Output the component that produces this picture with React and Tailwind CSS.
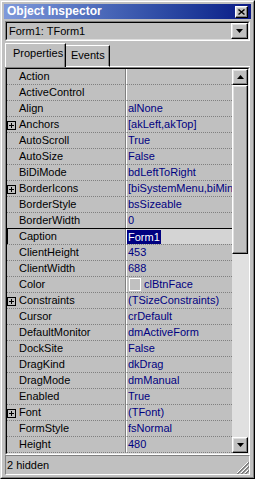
import React from 'react';

const props = [
  { name: 'Action', value: '' },
  { name: 'ActiveControl', value: '' },
  { name: 'Align', value: 'alNone' },
  { name: 'Anchors', value: '[akLeft,akTop]', plus: true },
  { name: 'AutoScroll', value: 'True' },
  { name: 'AutoSize', value: 'False' },
  { name: 'BiDiMode', value: 'bdLeftToRight' },
  { name: 'BorderIcons', value: '[biSystemMenu,biMinimize,biMaximize]', plus: true },
  { name: 'BorderStyle', value: 'bsSizeable' },
  { name: 'BorderWidth', value: '0' },
  { name: 'Caption', value: 'Form1', selected: true },
  { name: 'ClientHeight', value: '453' },
  { name: 'ClientWidth', value: '688' },
  { name: 'Color', value: 'clBtnFace', swatch: true },
  { name: 'Constraints', value: '(TSizeConstraints)', plus: true },
  { name: 'Cursor', value: 'crDefault' },
  { name: 'DefaultMonitor', value: 'dmActiveForm' },
  { name: 'DockSite', value: 'False' },
  { name: 'DragKind', value: 'dkDrag' },
  { name: 'DragMode', value: 'dmManual' },
  { name: 'Enabled', value: 'True' },
  { name: 'Font', value: '(TFont)', plus: true },
  { name: 'FormStyle', value: 'fsNormal' },
  { name: 'Height', value: '480' },
];

const raised =
  'border border-t-white border-l-white border-r-black border-b-black shadow-[inset_-1px_-1px_0_#808080,inset_1px_1px_0_#dfdfdf]';

function PlusBox() {
  return (
    <svg width="9" height="9" viewBox="0 0 9 9" className="shrink-0 mt-[4px]">
      <rect x="0.5" y="0.5" width="8" height="8" fill="none" stroke="#000" />
      <path d="M2 4.5h5M4.5 2v5" stroke="#000" />
    </svg>
  );
}

function Arrow({ down }) {
  return (
    <svg width="7" height="4" viewBox="0 0 7 4">
      {down ? <path d="M0 0h7L3.5 4z" fill="#000" /> : <path d="M0 4h7L3.5 0z" fill="#000" />}
    </svg>
  );
}

function PropRow({ p, beforeSelected }) {
  return (
    <div
      className={`flex h-[16px] border-b ${
        beforeSelected ? 'border-solid border-black' : 'border-dotted border-[#808080]'
      } ${p.selected ? 'shadow-[inset_1px_0_0_#000]' : ''}`}
    >
      <div className="w-[118px] flex items-start overflow-hidden whitespace-nowrap">
        <div className="w-[12px] shrink-0 flex">{p.plus && <PlusBox />}</div>
        <span className="leading-[15px] text-black">{p.name}</span>
      </div>
      <div className="w-[2px] h-[15px] border-l border-[#808080] bg-white" />
      <div
        className={`flex-1 flex items-center overflow-hidden whitespace-nowrap leading-[15px] text-[#000080] ${
          p.selected ? 'bg-[#d4d4d4]' : 'pl-[1px]'
        }`}
      >
        {p.swatch && (
          <span className="inline-block w-[12px] h-[13px] ml-[1px] mr-[3px] border border-white bg-[#c0c0c0] shrink-0" />
        )}
        {p.selected ? (
          <span className="bg-[#000080] text-white px-[1px] leading-[14px]">{p.value}</span>
        ) : (
          p.value
        )}
      </div>
    </div>
  );
}

export default function App() {
  return (
    <div className="w-[255px] h-[479px] bg-[#c0c0c0] border border-t-[#dfdfdf] border-l-[#dfdfdf] border-r-black border-b-black font-['Liberation_Sans',Arial,sans-serif] text-[11px] select-none">
      <div className="h-full border border-t-white border-l-white border-r-[#808080] border-b-[#808080] p-[2px] flex flex-col">
        {/* Title bar */}
        <div className="h-[15px] shrink-0 flex items-center justify-between bg-linear-to-r from-[#7f99da] to-[#0b1886]">
          <span className="pl-[3px] text-[12px] font-bold text-white leading-[15px]">Object Inspector</span>
          <div className={`w-[13px] h-[12px] mr-[3px] flex items-center justify-center bg-[#c0c0c0] ${raised}`}>
            <svg width="7" height="6" viewBox="0 0 7 6">
              <path d="M0.5 0.5l6 5M6.5 0.5l-6 5" stroke="#000" strokeWidth="1.4" />
            </svg>
          </div>
        </div>

        {/* Combo */}
        <div className="mt-[2px] mx-[1px] h-[20px] shrink-0 border border-t-[#808080] border-l-[#808080] border-r-white border-b-white">
          <div className="h-full flex items-start justify-between border border-t-black border-l-black border-r-[#dfdfdf] border-b-[#dfdfdf]">
            <span className="pl-[2px] leading-[16px] text-black">Form1: TForm1</span>
            <div className={`w-[17px] h-[16px] flex items-center justify-center bg-[#c0c0c0] ${raised}`}>
              <Arrow down />
            </div>
          </div>
        </div>

        {/* Tabs */}
        <div className="mt-[2px] h-[24px] shrink-0 flex items-end px-[1px]">
          <div className="h-[24px] w-[61px] border-t border-l border-white border-r border-r-black shadow-[inset_-1px_0_0_#808080] pl-[7px] pt-[2px] leading-[15px] text-black">
            Properties
          </div>
          <div className="h-[22px] w-[44px] border-t border-white border-r border-r-black border-b border-b-white shadow-[inset_-1px_0_0_#808080] pl-[5px] pt-[2px] leading-[15px] text-black">
            Events
          </div>
          <div className="flex-1 border-b border-white" />
        </div>

        {/* Grid */}
        <div className="flex-1 mx-[1px] border border-t-[#808080] border-l-[#808080] border-r-white border-b-white">
          <div className="h-full flex border border-t-black border-l-black border-r-[#dfdfdf] border-b-[#dfdfdf]">
            <div className="flex-1 flex flex-col overflow-hidden">
              {props.map((p, i) => (
                <PropRow key={p.name} p={p} beforeSelected={props[i + 1]?.selected} />
              ))}
            </div>
            <div className="w-[16px] flex flex-col">
              <div className={`h-[16px] flex items-center justify-center bg-[#c0c0c0] ${raised}`}>
                <Arrow />
              </div>
              <div className={`h-[169px] bg-[#c0c0c0] ${raised}`} />
              <div className="flex-1 bg-[#e0e0e0]" />
              <div className={`h-[16px] flex items-center justify-center bg-[#c0c0c0] ${raised}`}>
                <Arrow down />
              </div>
            </div>
          </div>
        </div>

        {/* Status bar */}
        <div className="h-[20px] shrink-0 mx-[1px] flex items-center justify-between border border-t-[#808080] border-l-[#808080] border-r-white border-b-white">
          <span className="pl-[1px] leading-[15px] text-black">2 hidden</span>
          <svg width="12" height="12" viewBox="0 0 12 12" className="self-end">
            <path d="M11 0L0 11M11 4L4 11M11 8L8 11" stroke="#fff" />
            <path d="M12 0L0 12M12 1L1 12M12 4L4 12M12 5L5 12M12 8L8 12M12 9L9 12" stroke="#808080" />
          </svg>
        </div>
      </div>
    </div>
  );
}
